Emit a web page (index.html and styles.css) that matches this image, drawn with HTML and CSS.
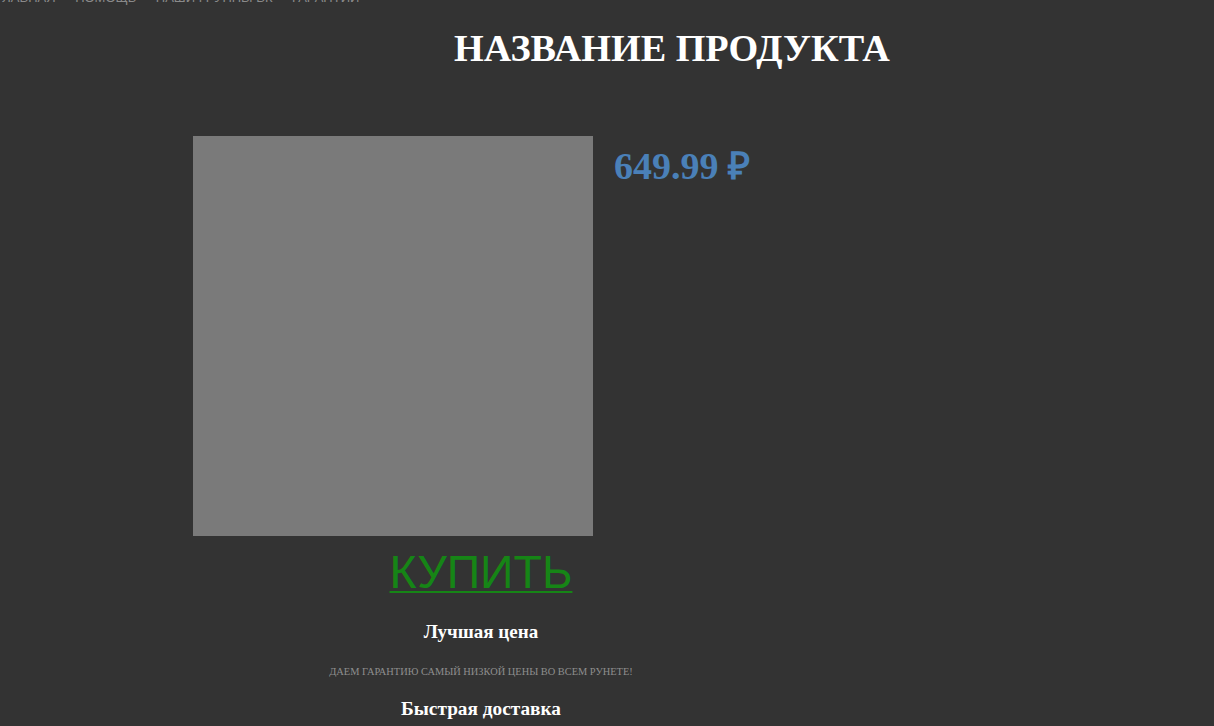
FILE: index.html
```html
<!DOCTYPE html>
<html lang="ru">
<head>
<meta charset="utf-8">
<title>Название продукта</title>
<link rel="stylesheet" href="styles.css">
</head>
<body>
<nav class="topnav">
  <a class="nav-link" href="#">Главная</a><span class="nav-sep">•</span>
  <a class="nav-link" href="#">Помощь</a><span class="nav-sep">•</span>
  <a class="nav-link" href="#">Наши группы ВК</a><span class="nav-sep">•</span>
  <a class="nav-link" href="#">Гарантии</a>
</nav>
<main class="container">
  <h1 class="title">НАЗВАНИЕ ПРОДУКТА</h1>
  <section class="product">
    <div class="product-image"></div>
    <div class="product-price">649.99 ₽</div>
  </section>
  <section class="info">
    <a class="buy" href="#">КУПИТЬ</a>
    <h3 class="feature-title">Лучшая цена</h3>
    <p class="feature-text">Даем гарантию самый низкой цены во всем рунете!</p>
    <h3 class="feature-title feature-title-next">Быстрая доставка</h3>
  </section>
</main>
</body>
</html>
```

FILE: styles.css
```css
html, body {
  margin: 0;
  padding: 0;
  background: #333333;
}

body {
  font-family: "Liberation Serif", "Times New Roman", serif;
  color: #ffffff;
  overflow: hidden;
}

.topnav {
  display: flex;
  align-items: center;
  gap: 8px;
  height: 4px;
  overflow: visible;
  font-family: "Liberation Sans", Arial, sans-serif;
  font-size: 13px;
  line-height: 4px;
  text-transform: uppercase;
  white-space: nowrap;
  position: relative;
  top: -4px;
  margin-left: -4px;
}

.nav-link {
  color: #8a8a8a;
  text-decoration: none;
}

.nav-sep {
  color: #6a6a6a;
  font-size: 10px;
}

.container {
  margin-left: 193px;
  width: 958px;
}

.title {
  margin: 23px 0 0;
  text-align: center;
  font-size: 38.2px;
  font-weight: bold;
  line-height: 42px;
  color: #ffffff;
}

.product {
  display: flex;
  align-items: flex-start;
  gap: 21px;
  margin-top: 67px;
}

.product-image {
  width: 400px;
  height: 400px;
  background: #7a7a7a;
}

.product-price {
  margin-top: 9px;
  font-size: 38px;
  font-weight: bold;
  line-height: 42px;
  color: #4a80b8;
}

.info {
  width: 576px;
  display: flex;
  flex-direction: column;
  align-items: center;
  text-align: center;
}

.buy {
  margin-top: 11px;
  font-family: "Liberation Sans", Arial, sans-serif;
  font-size: 46.5px;
  line-height: 50px;
  color: #168516;
  text-decoration: underline;
  text-decoration-thickness: 2px;
  text-underline-offset: 3px;
}

.feature-title {
  margin: 24px 0 0;
  font-size: 19px;
  font-weight: bold;
  line-height: 22px;
}

.feature-text {
  margin: 23px 0 0;
  font-size: 10.4px;
  line-height: 12px;
  text-transform: uppercase;
  color: #8e8e8e;
}

.feature-title-next {
  margin-top: 20px;
  font-size: 19.3px;
}
```
